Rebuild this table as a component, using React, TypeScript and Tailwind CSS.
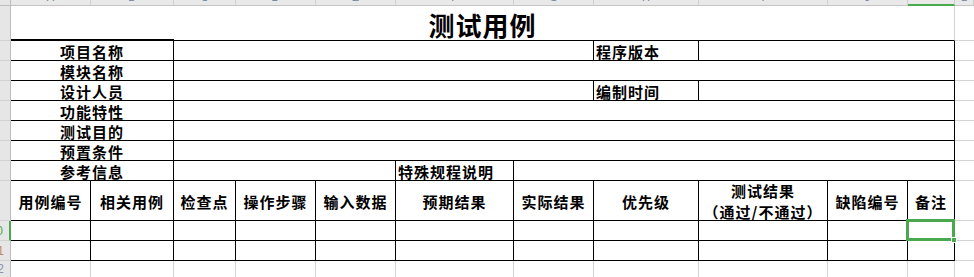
import React from "react";

const CJK = "font-['Noto_Sans_CJK_SC',sans-serif]";

const letters = ["A", "B", "C", "D", "E", "F", "G", "H", "I", "J", "K", "L"];

const infoRows = [
  { label: "项目名称", side: "程序版本" },
  { label: "模块名称" },
  { label: "设计人员", side: "编制时间" },
  { label: "功能特性" },
  { label: "测试目的" },
  { label: "预置条件" },
];

const headers = ["用例编号", "相关用例", "检查点", "操作步骤", "输入数据", "预期结果", "实际结果", "优先级"];

function Strip({ num, numClass = "text-[#9aa4b0]", active = false }: { num?: string; numClass?: string; active?: boolean }) {
  return (
    <div
      className={`relative bg-[#e6e6e6] border-b border-[#d2d2d2] overflow-hidden flex items-center justify-end ${
        active ? "border-r-2 border-r-[#4aa84f]" : "border-r border-r-[#bdbdbd]"
      }`}
    >
      {num && (
        <span className={`font-['Liberation_Sans',sans-serif] text-[12px] leading-none -translate-x-[6px] ${numClass}`}>
          {num}
        </span>
      )}
    </div>
  );
}

const cell = "border-r border-b border-black";
const gap = "border-b border-[#d4d4d4]";
const label = `${cell} flex items-center justify-center pt-[3px] text-[15px] font-bold tracking-[1px] text-black`;

export default function App() {
  return (
    <div className={`w-[974px] h-[277px] overflow-hidden bg-white ${CJK}`}>
      <div className="grid grid-cols-[11px_80px_83px_62px_80px_80px_118px_80px_105px_129px_80px_47px_19px] grid-rows-[6px_35px_repeat(7,20px)_40px_20px_20px_17px]">
        {/* column header strip */}
        <div className="bg-[#e6e6e6] border-r border-b border-[#bdbdbd]" />
        {letters.map((l) => (
          <div
            key={l}
            className={`relative bg-[#e9e9e9] border-r border-[#d0d0d0] overflow-hidden flex items-end justify-center ${
              l === "K" ? "border-b-2 border-b-[#4aa84f]" : "border-b border-b-[#c4c4c4]"
            }`}
          >
            <span className="font-['Liberation_Sans',sans-serif] text-[11px] leading-none text-[#6b7f99] -translate-y-[2px]">
              {l}
            </span>
          </div>
        ))}

        {/* title */}
        <Strip />
        <div className="col-span-11 border-b border-black border-r border-r-[#d4d4d4] flex items-center justify-center pt-[4px]">
          <span className="text-[26px] font-bold leading-none tracking-[1px] text-black">测试用例</span>
        </div>
        <div className={gap} />

        {/* info rows */}
        {infoRows.map((r, i) => (
          <React.Fragment key={r.label}>
            <Strip />
            <div className={`col-span-2 ${label} ${i === 0 ? "shadow-[0_-2px_0_#000]" : ""}`}>{r.label}</div>
            {r.side ? (
              <>
                <div className={`col-span-5 ${cell}`} />
                <div className={`${cell} flex items-center pl-[2px] pt-[3px] text-[15px] font-bold tracking-[1px] text-black whitespace-nowrap`}>
                  {r.side}
                </div>
                <div className={`col-span-3 ${cell}`} />
              </>
            ) : (
              <div className={`col-span-9 ${cell}`} />
            )}
            <div className={gap} />
          </React.Fragment>
        ))}

        {/* reference row */}
        <Strip />
        <div className={`col-span-2 ${label}`}>参考信息</div>
        <div className={`col-span-3 ${cell}`} />
        <div className={`${cell} flex items-center pl-[2px] pt-[3px] text-[15px] font-bold tracking-[1px] text-black whitespace-nowrap`}>
          特殊规程说明
        </div>
        <div className={`col-span-5 ${cell}`} />
        <div className={gap} />

        {/* table header */}
        <Strip />
        {headers.map((h) => (
          <div key={h} className={`${cell} flex items-center justify-center pt-[4px] text-[15px] font-bold tracking-[1px] text-black whitespace-nowrap`}>
            {h}
          </div>
        ))}
        <div className={`${cell} flex flex-col items-center justify-center pt-[1px] text-[15px] font-bold leading-[21px] text-black whitespace-nowrap`}>
          <span className="tracking-[1px]">测试结果</span>
          <span className="tracking-[1px]">（通过/不通过）</span>
        </div>
        <div className={`${cell} flex items-center justify-center pt-[4px] text-[15px] font-bold tracking-[1px] text-black whitespace-nowrap`}>
          缺陷编号
        </div>
        <div className={`${cell} flex items-center justify-center pt-[4px] text-[15px] font-bold tracking-[1px] text-black whitespace-nowrap`}>
          备注
        </div>
        <div className={gap} />

        {/* data rows */}
        <Strip num="10" numClass="text-[#4aa84f]" active />
        {letters.slice(0, 10).map((l) => (
          <div key={l} className={cell} />
        ))}
        <div className={`relative z-10 ${cell}`}>
          <div className="absolute -left-[2px] -top-[2px] -right-[1px] -bottom-[1px] border-[3px] border-[#4aa84f]" />
          <div className="absolute -right-[3px] -bottom-[3px] w-[6px] h-[6px] bg-[#4aa84f] border border-white" />
        </div>
        <div className={gap} />

        <Strip num="11" numClass="text-[#c08a5a]" />
        {letters.slice(0, 11).map((l) => (
          <div key={l} className={cell} />
        ))}
        <div className={gap} />

        <Strip num="12" numClass="text-[#8a94a6]" />
        {letters.slice(0, 11).map((l) => (
          <div key={l} className="border-r border-[#d4d4d4]" />
        ))}
        <div />
      </div>
    </div>
  );
}
